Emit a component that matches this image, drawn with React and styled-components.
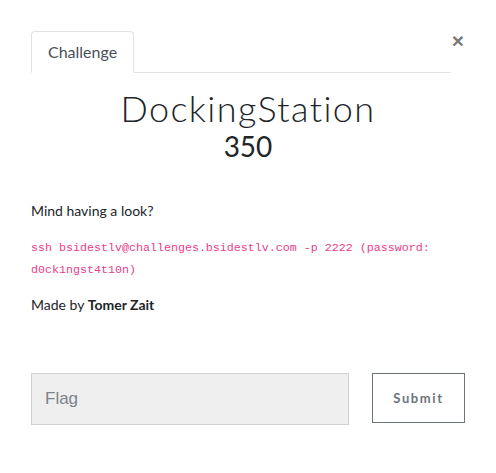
import React from "react";
import styled, { createGlobalStyle } from "styled-components";

const Global = createGlobalStyle`
  html, body { margin: 0; padding: 0; background: #fff; }
  body { font-family: Lato, "Open Sans", sans-serif; color: #212529; font-size: 14px; line-height: 1.5; }
  * { box-sizing: border-box; }
`;

const Modal = styled.div`
  width: 496px;
  padding: 31px 31px 0 31px;
`;

const Header = styled.div`
  display: flex;
  align-items: flex-start;
`;

const Nav = styled.div`
  flex: 1;
  display: flex;
  border-bottom: 1px solid #dee2e6;
`;

const Tab = styled.div`
  height: 42px;
  margin-bottom: -1px;
  padding: 0 16px;
  display: flex;
  align-items: center;
  font-size: 16px;
  color: #495057;
  background: #fff;
  border: 1px solid #dee2e6;
  border-bottom-color: #fff;
  border-radius: 4px 4px 0 0;
`;

const Close = styled.button`
  width: 14px;
  border: 0;
  background: none;
  padding: 0;
  margin-top: -1px;
  font-family: "Liberation Sans", Arial, sans-serif;
  font-size: 21px;
  font-weight: 700;
  line-height: 1;
  color: #6c6c6c;
  opacity: 0.9;
  text-align: center;
`;

const Title = styled.h2`
  margin: 14px 0 0;
  text-align: center;
  font-family: Lato, sans-serif;
  font-weight: 300;
  font-size: 36px;
  letter-spacing: 1.4px;
  line-height: 1.2;
  color: #212529;
`;

const Points = styled.h3`
  margin: 0;
  text-align: center;
  font-weight: 400;
  font-size: 28px;
  line-height: 1.2;
  color: #212529;
`;

const Desc = styled.div`
  margin-top: 36px;
`;

const P = styled.p`
  margin: 0 0 14px;
  font-size: 14px;
`;

const Code = styled.code`
  font-family: "Liberation Mono", monospace;
  font-size: 11.67px;
  color: #e83e8c;
`;

const Form = styled.div`
  margin-top: 58px;
  display: flex;
  align-items: flex-start;
  gap: 23px;
`;

const Input = styled.input`
  width: 318px;
  height: 52px;
  background: #efefef;
  border: 1px solid #d0d2d6;
  padding: 0 13px;
  font-family: "Liberation Sans", Arial, sans-serif;
  font-size: 17px;
  color: #495057;
  outline: none;
  &::placeholder { color: #7c838a; }
`;

const Submit = styled.button`
  width: 93px;
  height: 50px;
  background: #fff;
  border: 1px solid #6c757d;
  color: #6c757d;
  font-family: Lato, sans-serif;
  font-weight: 700;
  font-size: 13px;
  letter-spacing: 1.6px;
  padding: 0;
`;

export default function App() {
  return (
    <>
      <Global />
      <Modal>
        <Header>
          <Nav>
            <Tab>Challenge</Tab>
          </Nav>
          <Close aria-label="Close">×</Close>
        </Header>
        <Title>DockingStation</Title>
        <Points>350</Points>
        <Desc>
          <P>Mind having a look?</P>
          <P>
            <Code>ssh bsidestlv@challenges.bsidestlv.com -p 2222 (password: d0ck1ngst4t10n)</Code>
          </P>
          <P>
            Made by <strong>Tomer Zait</strong>
          </P>
        </Desc>
        <Form>
          <Input placeholder="Flag" />
          <Submit>Submit</Submit>
        </Form>
      </Modal>
    </>
  );
}
